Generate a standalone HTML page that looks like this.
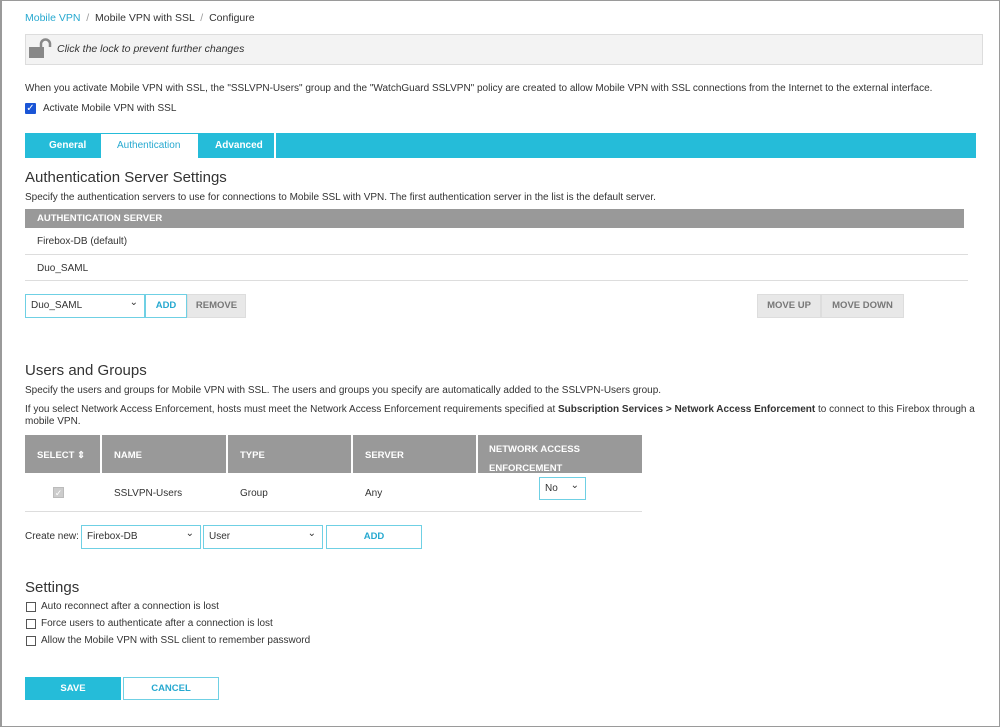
<!DOCTYPE html>
<html><head><meta charset="utf-8"><style>
*{box-sizing:border-box;margin:0;padding:0}
body{width:1000px;height:727px;background:#fff;font-family:"Liberation Sans",sans-serif;font-size:10px;color:#333;position:relative;overflow:hidden}
.frame{position:absolute;left:0;top:0;width:1000px;height:727px;border:1px solid #9a9a9a;border-left-width:2px}
.a{position:absolute;white-space:nowrap}
.hd{background:#999;color:#fff;font-weight:bold;font-size:9.5px}
.sel{position:absolute;border:1px solid #6fd0e4;background:#fff;font-size:10px;padding-left:5px;line-height:22px}
.sel:after{content:"⌄";position:absolute;right:6px;top:-3px;font-size:10px}
.btn{position:absolute;font-weight:bold;font-size:9.5px;text-align:center}
.cb{position:absolute;width:10px;height:10px;border:1px solid #555;background:#fff}
h2{font-weight:normal;font-size:15px;color:#333;position:absolute}
</style></head><body>
<div class="frame"></div>
<div class="a" style="left:25px;top:12px;font-size:10.5px"><span style="color:#27a9d0">Mobile VPN</span> <span style="color:#999">&nbsp;/&nbsp;</span> Mobile VPN with SSL <span style="color:#999">&nbsp;/&nbsp;</span> Configure</div>
<div class="a" style="left:25px;top:34px;width:958px;height:31px;background:#f3f3f3;border:1px solid #ddd"></div>
<svg class="a" style="left:28px;top:38px" width="26" height="22"><rect x="1" y="9" width="15" height="11" fill="#888"/><path d="M13 9V6a4.5 4.5 0 0 1 9 0v3" stroke="#888" stroke-width="2.5" fill="none"/></svg>
<div class="a" style="left:57px;top:43px;font-style:italic;font-size:10.5px">Click the lock to prevent further changes</div>
<div class="a" style="left:25px;top:83px">When you activate Mobile VPN with SSL, the "SSLVPN-Users" group and the "WatchGuard SSLVPN" policy are created to allow Mobile VPN with SSL connections from the Internet to the external interface.</div>
<div class="a" style="left:25px;top:103px;width:11px;height:11px;background:#1a55d6;border-radius:1px;color:#fff;font-size:10px;line-height:11px;text-align:center">✓</div>
<div class="a" style="left:43px;top:103px">Activate Mobile VPN with SSL</div>
<div class="a" style="left:25px;top:133px;width:951px;height:25px;background:#25bcd9"></div>
<div class="a" style="left:100px;top:133px;width:99px;height:25px;background:#fff;border:1px solid #25bcd9;border-bottom:none"></div>
<div class="a" style="left:274px;top:133px;width:2px;height:25px;background:#fff"></div>
<div class="a" style="left:49px;top:140px;color:#fff;font-weight:bold">General</div>
<div class="a" style="left:117px;top:140px;color:#27a9d0">Authentication</div>
<div class="a" style="left:215px;top:140px;color:#fff;font-weight:bold">Advanced</div>
<h2 style="left:25px;top:169px">Authentication Server Settings</h2>
<div class="a" style="left:25px;top:192px">Specify the authentication servers to use for connections to Mobile SSL with VPN. The first authentication server in the list is the default server.</div>
<div class="a hd" style="left:25px;top:209px;width:939px;height:19px;padding:4px 12px">AUTHENTICATION SERVER</div>
<div class="a" style="left:37px;top:236px">Firebox-DB (default)</div>
<div class="a" style="left:25px;top:254px;width:943px;height:1px;background:#ddd"></div>
<div class="a" style="left:37px;top:263px">Duo_SAML</div>
<div class="a" style="left:25px;top:280px;width:943px;height:1px;background:#ddd"></div>
<div class="sel" style="left:25px;top:294px;width:120px;height:24px">Duo_SAML</div>
<div class="btn" style="left:145px;top:294px;width:42px;height:24px;border:1px solid #6fd0e4;color:#27a9d0;line-height:22px">ADD</div>
<div class="btn" style="left:187px;top:294px;width:59px;height:24px;background:#e8e8e8;border:1px solid #ddd;color:#777;line-height:22px">REMOVE</div>
<div class="btn" style="left:757px;top:294px;width:64px;height:24px;background:#e8e8e8;border:1px solid #ddd;color:#777;line-height:22px">MOVE UP</div>
<div class="btn" style="left:821px;top:294px;width:83px;height:24px;background:#e8e8e8;border:1px solid #ddd;color:#777;line-height:22px">MOVE DOWN</div>
<h2 style="left:25px;top:362px">Users and Groups</h2>
<div class="a" style="left:25px;top:385px">Specify the users and groups for Mobile VPN with SSL. The users and groups you specify are automatically added to the SSLVPN-Users group.</div>
<div class="a" style="left:25px;top:404px;line-height:12px">If you select Network Access Enforcement, hosts must meet the Network Access Enforcement requirements specified at <b>Subscription Services &gt; Network Access Enforcement</b> to connect to this Firebox through a<br>mobile VPN.</div>
<div class="a hd" style="left:25px;top:435px;width:617px;height:38px"></div>
<div class="a" style="left:100px;top:435px;width:2px;height:38px;background:#fff"></div>
<div class="a" style="left:226px;top:435px;width:2px;height:38px;background:#fff"></div>
<div class="a" style="left:351px;top:435px;width:2px;height:38px;background:#fff"></div>
<div class="a" style="left:476px;top:435px;width:2px;height:38px;background:#fff"></div>
<div class="a hd" style="left:37px;top:450px;background:none">SELECT ⇕</div>
<div class="a hd" style="left:114px;top:450px;background:none">NAME</div>
<div class="a hd" style="left:240px;top:450px;background:none">TYPE</div>
<div class="a hd" style="left:365px;top:450px;background:none">SERVER</div>
<div class="a hd" style="left:489px;top:440px;background:none;line-height:19px">NETWORK ACCESS<br>ENFORCEMENT</div>
<div class="a" style="left:53px;top:487px;width:11px;height:11px;background:#ccc;border:1px solid #bbb;color:#fff;font-size:9px;line-height:10px;text-align:center">✓</div>
<div class="a" style="left:114px;top:488px">SSLVPN-Users</div>
<div class="a" style="left:240px;top:488px">Group</div>
<div class="a" style="left:365px;top:488px">Any</div>
<div class="sel" style="left:539px;top:477px;width:47px;height:23px">No</div>
<div class="a" style="left:25px;top:511px;width:617px;height:1px;background:#ddd"></div>
<div class="a" style="left:25px;top:531px">Create new:</div>
<div class="sel" style="left:81px;top:525px;width:120px;height:24px">Firebox-DB</div>
<div class="sel" style="left:203px;top:525px;width:120px;height:24px">User</div>
<div class="btn" style="left:326px;top:525px;width:96px;height:24px;border:1px solid #6fd0e4;color:#27a9d0;line-height:22px">ADD</div>
<h2 style="left:25px;top:579px">Settings</h2>
<div class="cb" style="left:26px;top:602px"></div><div class="a" style="left:41px;top:601px">Auto reconnect after a connection is lost</div>
<div class="cb" style="left:26px;top:619px"></div><div class="a" style="left:41px;top:618px">Force users to authenticate after a connection is lost</div>
<div class="cb" style="left:26px;top:636px"></div><div class="a" style="left:41px;top:635px">Allow the Mobile VPN with SSL client to remember password</div>
<div class="btn" style="left:25px;top:677px;width:96px;height:23px;background:#25bcd9;color:#fff;line-height:23px">SAVE</div>
<div class="btn" style="left:123px;top:677px;width:96px;height:23px;border:1px solid #6fd0e4;color:#27a9d0;line-height:21px">CANCEL</div>
</body></html>
